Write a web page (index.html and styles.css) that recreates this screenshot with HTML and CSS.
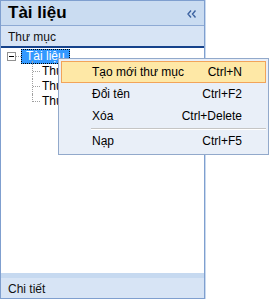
FILE: index.html
```html
<!DOCTYPE html>
<html lang="vi">
<head>
    <meta charset="UTF-8">
    <meta name="viewport" content="width=device-width, initial-scale=1.0">
    <title>Tài liệu</title>
    <link rel="stylesheet" href="styles.css">
</head>
<body>
    <div class="panel">
        <div class="panel-head">
            <span class="panel-title">Tài liệu</span>
            <svg class="collapse" width="10" height="8" viewBox="0 0 10 8">
                <path d="M4 0.5 L1 4 L4 7.5 M8.5 0.5 L5.5 4 L8.5 7.5" fill="none" stroke="#3d63a0" stroke-width="1.4"/>
            </svg>
        </div>
        <div class="sub-head">Thư mục</div>

        <div class="tree">
            <div class="tree-root">
                <span class="expander"></span>
                <span class="root-link"></span>
                <span class="root-label">Tài liệu</span>
            </div>
            <div class="tree-children">
                <div class="tree-item">Thư mục 1</div>
                <div class="tree-item">Thư mục 2</div>
                <div class="tree-item">Thư mục 3</div>
            </div>
        </div>

        <div class="band"></div>
        <div class="foot">Chi tiết</div>
    </div>

    <div class="menu">
        <div class="menu-item active"><span>Tạo mới thư mục</span><span class="key">Ctrl+N</span></div>
        <div class="menu-item"><span>Đổi tên</span><span class="key">Ctrl+F2</span></div>
        <div class="menu-item"><span>Xóa</span><span class="key">Ctrl+Delete</span></div>
        <div class="menu-sep"></div>
        <div class="menu-item"><span>Nạp</span><span class="key">Ctrl+F5</span></div>
    </div>
</body>
</html>
```

FILE: styles.css
```css
* {
    margin: 0;
    padding: 0;
    box-sizing: border-box;
}

body {
    width: 270px;
    height: 299px;
    background: #fff;
    font-family: 'Liberation Sans', Arial, sans-serif;
    font-size: 12px;
    color: #000;
    position: relative;
    overflow: hidden;
}

.panel {
    width: 205px;
    height: 299px;
    border: 1px solid #7f9fcf;
    box-shadow: 1px 0 0 #c9d9ee;
    display: flex;
    flex-direction: column;
}

.panel-head {
    height: 25px;
    flex-shrink: 0;
    background: #cadcf1;
    border-bottom: 1px solid #8eaad4;
    display: flex;
    align-items: center;
    justify-content: space-between;
    padding: 0 7px 0 7px;
}

.panel-title {
    font-size: 17px;
    font-weight: bold;
    line-height: 24px;
}

.collapse {
    margin-top: 1px;
}

.sub-head {
    height: 22px;
    flex-shrink: 0;
    background: #d7e4f5;
    border-bottom: 2px solid #15428b;
    padding: 3px 0 0 7px;
    line-height: 16px;
    color: #111;
}

.tree {
    flex: 1;
    background: #fff;
    padding-top: 1px;
}

.tree-root {
    height: 15px;
    display: flex;
    align-items: center;
    padding-left: 6px;
}

.expander {
    width: 9px;
    height: 9px;
    border: 1px solid #919191;
    position: relative;
}

.expander::after {
    content: "";
    position: absolute;
    left: 1px;
    top: 3px;
    width: 5px;
    height: 1px;
    background: #000;
}

.root-link {
    width: 5px;
    border-top: 1px dotted #a0a0a0;
}

.root-label {
    height: 15px;
    line-height: 13px;
    padding: 0 4px;
    background: #3399ff;
    color: #fff;
    border: 1px dotted #000;
}

.tree-children {
    padding-left: 41px;
}

.tree-item {
    height: 15px;
    line-height: 15px;
    position: relative;
    white-space: nowrap;
}

.tree-item::before {
    content: "";
    position: absolute;
    left: -10px;
    top: 0;
    height: 15px;
    border-left: 1px dotted #a0a0a0;
}

.tree-item:first-child::before {
    top: -3px;
    height: 18px;
}

.tree-item:last-child::before {
    height: 8px;
}

.tree-item::after {
    content: "";
    position: absolute;
    left: -9px;
    top: 7px;
    width: 7px;
    border-top: 1px dotted #a0a0a0;
}

.band {
    height: 5px;
    flex-shrink: 0;
    background: #c6d9f0;
}

.foot {
    height: 20px;
    flex-shrink: 0;
    background: #d7e4f5;
    padding: 3px 0 0 7px;
    line-height: 16px;
    color: #111;
}

.menu {
    position: absolute;
    left: 58px;
    top: 58px;
    width: 211px;
    background: #e9eff8;
    border: 1px solid #92a9cb;
    padding: 2px 2px 2px 2px;
}

.menu-item {
    height: 22px;
    display: flex;
    align-items: center;
    justify-content: space-between;
    padding: 0 23px 0 30px;
    border: 1px solid transparent;
}

.menu-item.active {
    background: #fee8a6;
    border-color: #f2a45a;
}

.menu-sep {
    height: 3px;
    margin-left: 30px;
    border-top: 1px solid #e9eff8;
    background: linear-gradient(#c5c5c5 0 1px, #fff 1px 2px, transparent 2px);
}
```
